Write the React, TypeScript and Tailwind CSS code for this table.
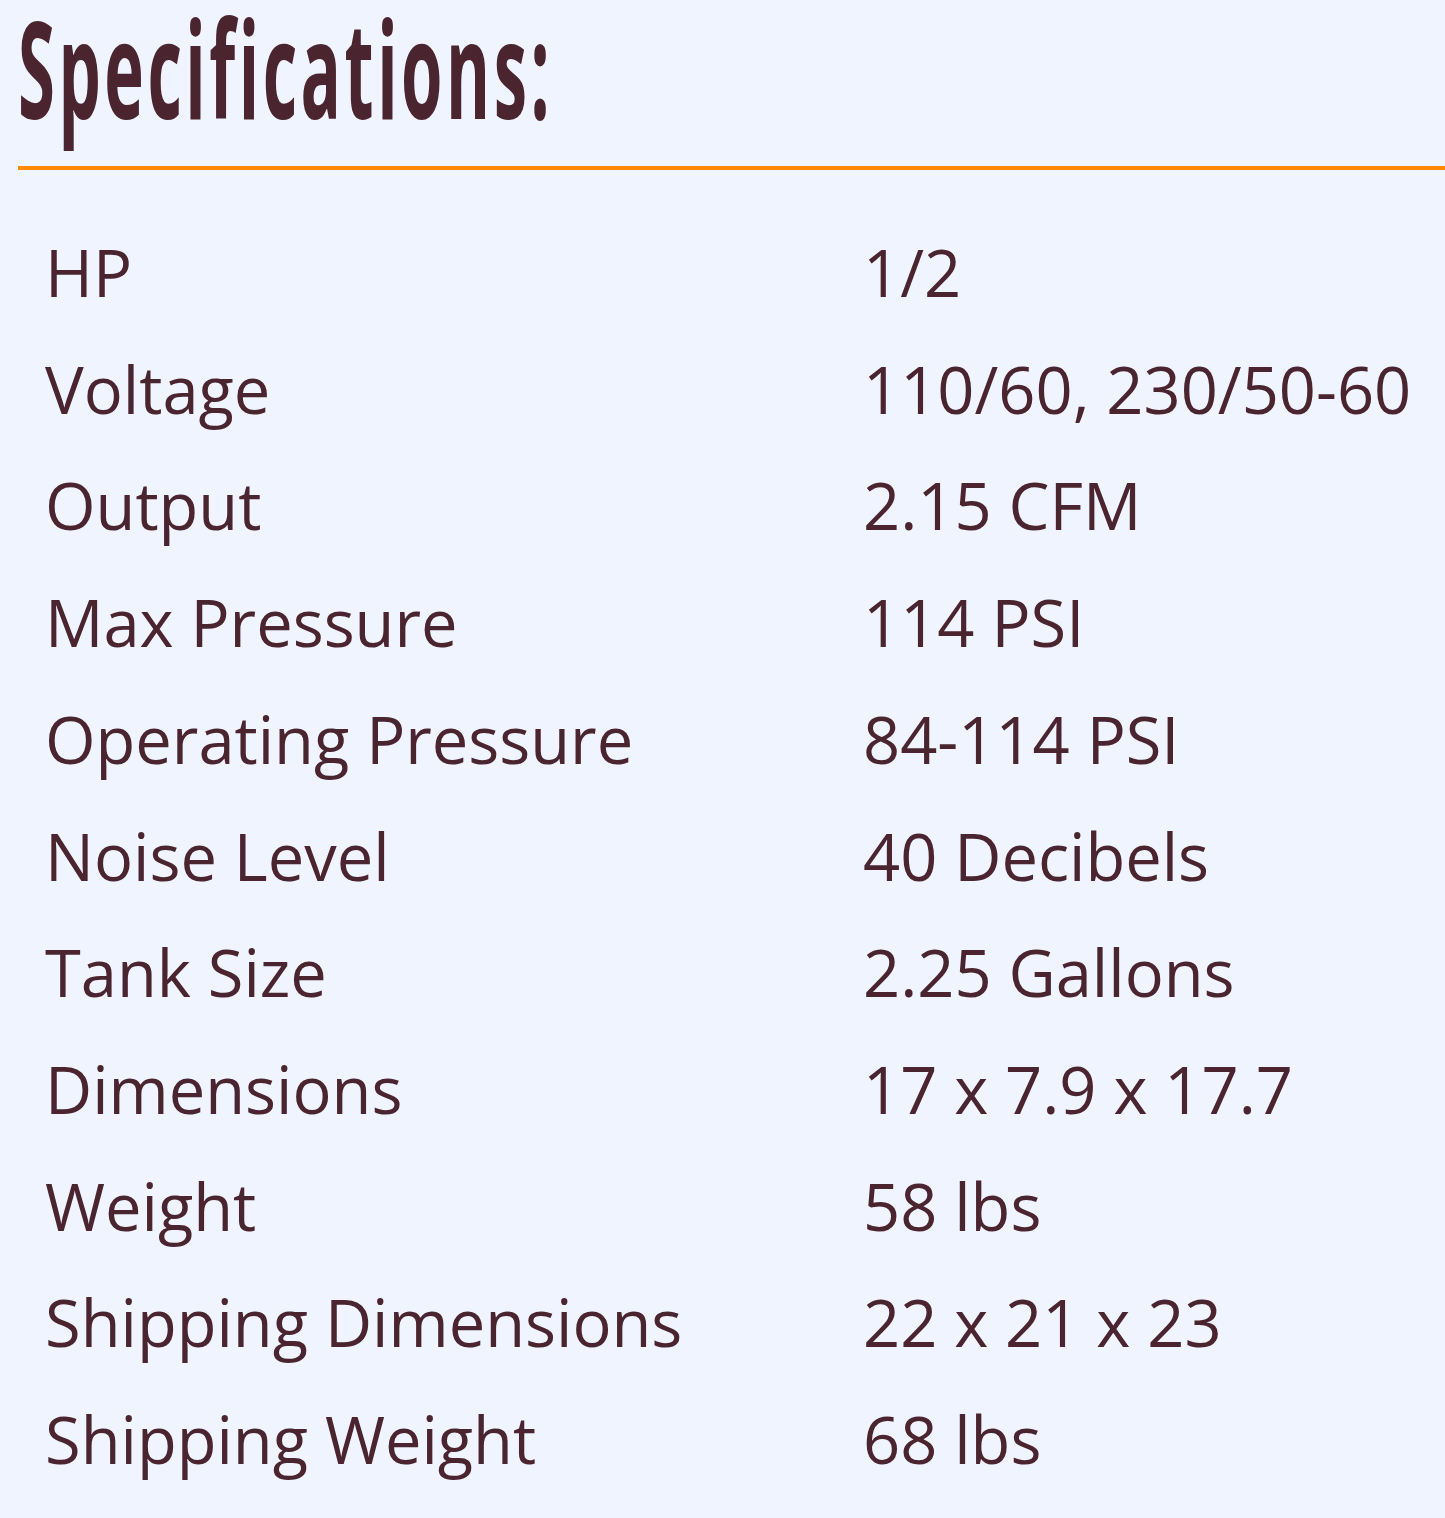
import React from "react";

const specs: [string, string][] = [
  ["HP", "1/2"],
  ["Voltage", "110/60, 230/50-60"],
  ["Output", "2.15 CFM"],
  ["Max Pressure", "114 PSI"],
  ["Operating Pressure", "84-114 PSI"],
  ["Noise Level", "40 Decibels"],
  ["Tank Size", "2.25 Gallons"],
  ["Dimensions", "17 x 7.9 x 17.7"],
  ["Weight", "58 lbs"],
  ["Shipping Dimensions", "22 x 21 x 23"],
  ["Shipping Weight", "68 lbs"],
];

export default function App() {
  return (
    <div className="min-h-[1518px] w-[1445px] bg-[#eff4fe] pl-[18px] text-[#4a2530] overflow-hidden">
      {/* heading */}
      <div className="h-[166px] pt-[2px] whitespace-nowrap">
        <h2 className="inline-block origin-left scale-x-[0.5] font-['Open_Sans',sans-serif] text-[134px] font-bold leading-[130px] tracking-[7px]">
          Specifications:
        </h2>
      </div>
      <div className="h-[4px] bg-[#ff8a00]" />

      {/* spec table */}
      <div className="pt-[44px] pl-[27px] font-['Open_Sans',sans-serif] text-[65px] leading-[116.7px]">
        {specs.map(([label, value]) => (
          <div key={label} className="grid grid-cols-[818px_1fr]">
            <span>{label}</span>
            <span className="whitespace-nowrap">{value}</span>
          </div>
        ))}
      </div>
    </div>
  );
}
